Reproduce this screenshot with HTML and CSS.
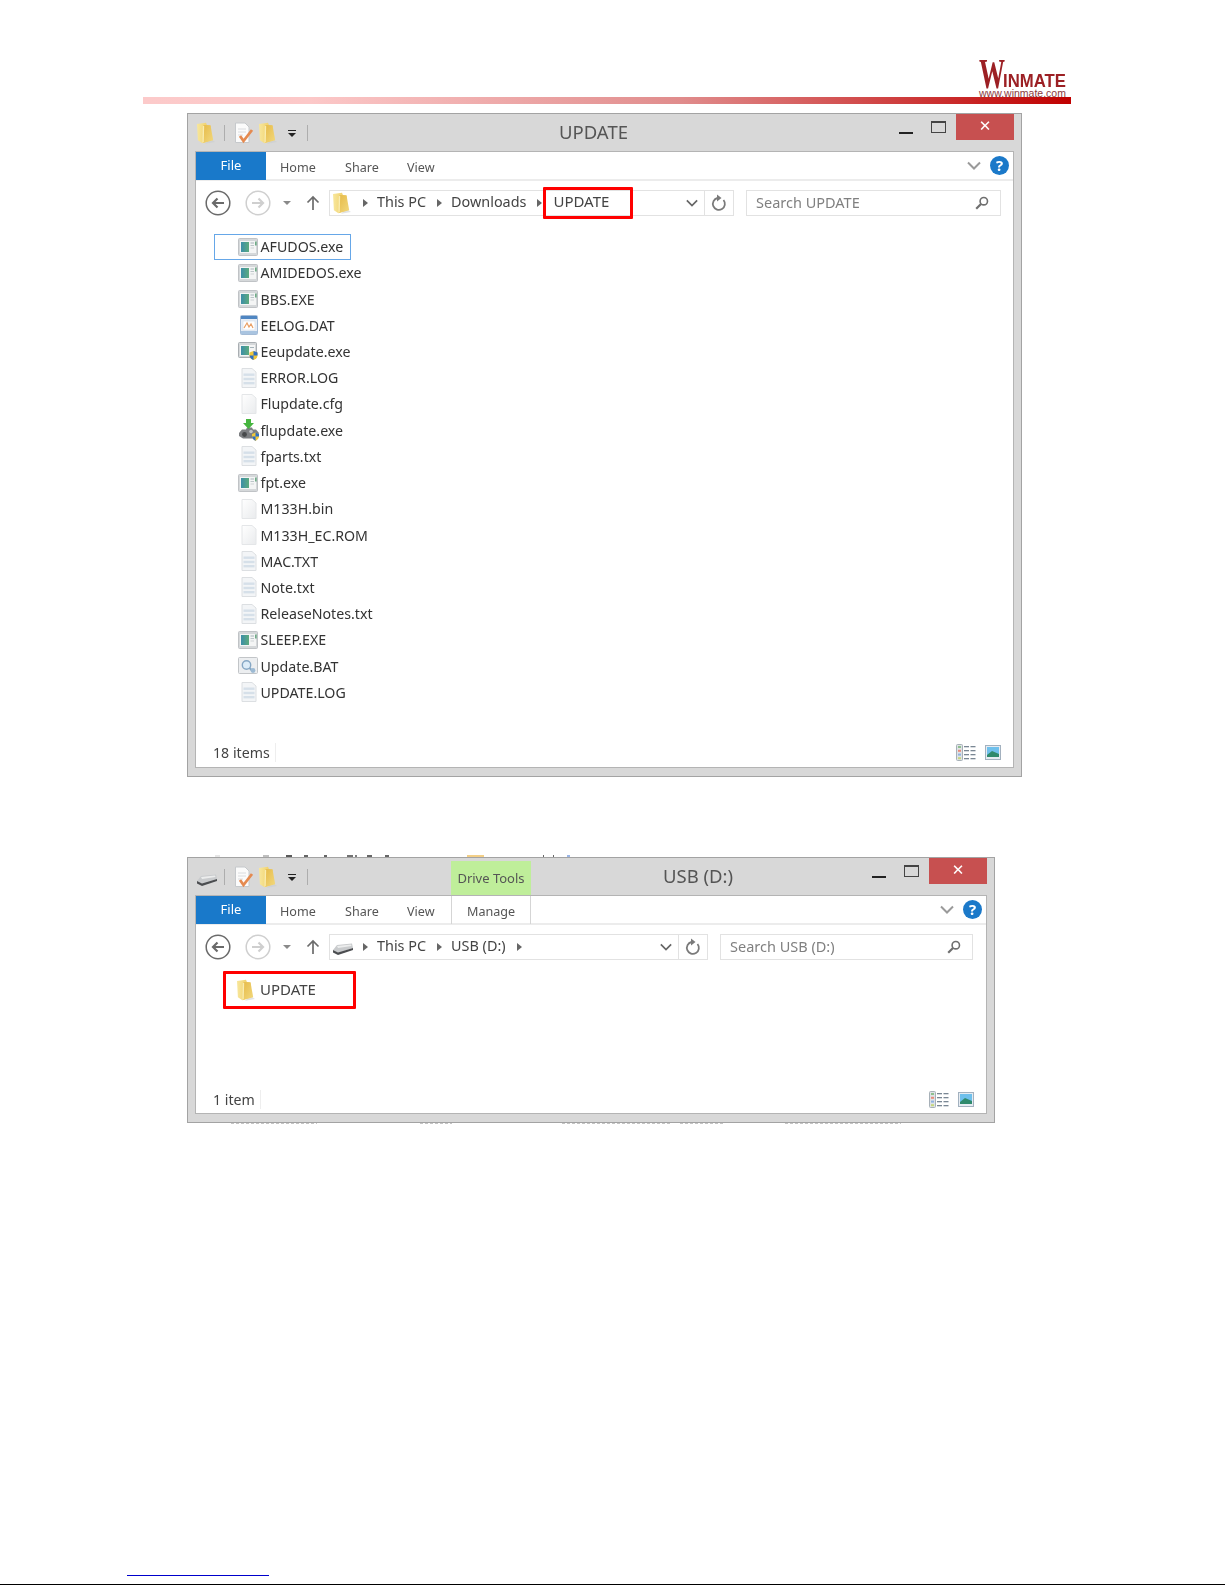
FILE: index.html
```html
<!DOCTYPE html>
<html lang="en">
<head>
<meta charset="utf-8">
<title>UPDATE</title>
<link rel="stylesheet" href="styles.css">
</head>
<body>
<svg class="defs" width="0" height="0" aria-hidden="true">
  <defs>
    <linearGradient id="fold" x1="0" y1="0" x2="1" y2="0"><stop offset="0" stop-color="#f8e79c"/><stop offset="1" stop-color="#edc95c"/></linearGradient>
    <linearGradient id="fold2" x1="0" y1="0" x2="1" y2="1"><stop offset="0" stop-color="#e6ba48"/><stop offset="1" stop-color="#f2d97e"/></linearGradient>
    <linearGradient id="doc" x1="0" y1="0" x2="1" y2="1"><stop offset="0" stop-color="#fff"/><stop offset="1" stop-color="#e9ebed"/></linearGradient>
    <linearGradient id="scr" x1="0" y1="0" x2="1" y2="0"><stop offset="0" stop-color="#3c8ea8"/><stop offset="1" stop-color="#5cab7e"/></linearGradient>
    <symbol id="i-folder" viewBox="0 0 20 24">
      <path d="M14 18 L20 22 L9 24Z" fill="#c9ccd0" opacity=".55"/>
      <path d="M0 2 L10 0.5 L11 3 L15 4 L15.5 20 L6 23.5 L1 20Z" fill="url(#fold)"/>
      <path d="M7 3 L15 3.5 L18 20 L6.5 23Z" fill="url(#fold2)"/>
      <path d="M6.5 4 L8 4 L7.5 22 L6 23Z" fill="#f9ecb0"/>
    </symbol>
    <symbol id="i-exe" viewBox="0 0 20 18">
      <rect x=".5" y=".5" width="19" height="17" rx="1" fill="#d5d8da" stroke="#c0c3c6"/>
      <rect x="2" y="3" width="16" height="12" fill="#f4f5f5"/>
      <rect x="3" y="4" width="8" height="10" fill="url(#scr)"/>
      <rect x="12.5" y="4.5" width="3.5" height="1" fill="#a5b3ba"/>
      <rect x="12.5" y="7" width="3.5" height="1" fill="#bcc5c9"/>
      <rect x="12.5" y="9.5" width="3.5" height="1" fill="#cdd3d6"/>
      <rect x="17.2" y="3.5" width="1.3" height="4" fill="#4f9a6c"/>
    </symbol>
    <symbol id="i-exe-shield" viewBox="0 0 20 18">
      <rect x=".5" y=".5" width="18" height="15" rx="1" fill="#d5d8da" stroke="#a9aeb2"/>
      <rect x="2" y="3" width="15" height="11" fill="#f4f5f5"/>
      <rect x="3" y="4" width="8" height="9" fill="url(#scr)"/>
      <rect x="12" y="5" width="4" height="1" fill="#a5b3ba"/>
      <path d="M11.5 10.5 L15.5 9 L19.5 10.5 L19.5 14 Q19 16.8 15.5 18 Q12 16.8 11.5 14Z" fill="#f0c83a"/>
      <path d="M15.5 9 L19.5 10.5 L19.5 13.5 L15.5 13.5Z M15.5 13.5 L11.5 13.5 Q12 16.8 15.5 18Z" fill="#2f6fc1"/>
    </symbol>
    <symbol id="i-text" viewBox="0 0 16 20">
      <path d="M1 .5 H11 L15 4 V19.5 H1Z" fill="#f3f5f7" stroke="#dcdfe2"/>
      <g fill="#d6e0e9"><rect x="2.5" y="5.5" width="11" height="2.4"/><rect x="2.5" y="9.8" width="11" height="2.4"/><rect x="2.5" y="14" width="11" height="2.4"/></g>
    </symbol>
    <symbol id="i-blank" viewBox="0 0 16 20">
      <path d="M1 .5 H11 L15 4 V19.5 H1Z" fill="url(#doc)" stroke="#e4e6e8"/>
    </symbol>
    <symbol id="i-dat" viewBox="0 0 18 20">
      <rect x=".5" y=".5" width="17" height="19" rx="1" fill="#e8eef6" stroke="#a4bbd6"/>
      <rect x="1" y="1" width="16" height="3" fill="#4f86c2"/>
      <rect x="3" y="6" width="12" height="9" fill="#fff" stroke="#d2dde9" stroke-width=".6"/>
      <path d="M4 13 L7 8 L9 12 L11 9 L13 13" fill="none" stroke="#e9a066" stroke-width="1.2"/>
      <rect x="1" y="16" width="16" height="3" fill="#a9c4e0"/>
    </symbol>
    <symbol id="i-flup" viewBox="0 0 22 22">
      <path d="M1 14 L4 10.5 L8 10.5 L9 8.5 L14 8.5 L15 10.5 L18 10.5 L21 14 L20 17 L16 19.5 L5 19.5 L1 17Z" fill="#7d7f82"/>
      <circle cx="6.5" cy="15.5" r="2.4" fill="#47494b"/>
      <circle cx="13" cy="12.5" r="1.8" fill="#c3c5c7"/>
      <path d="M8 0 H13 V4 H16 L10.5 10 L5 4 H8Z" fill="#46b53f"/>
      <path d="M14 15 L17.5 13.5 L21 15 L21 18 Q20.5 20.5 17.5 22 Q14.5 20.5 14 18Z" fill="#f0c83a"/>
      <path d="M17.5 13.5 L21 15 L21 17.5 L17.5 17.5Z M17.5 17.5 L14 17.5 Q14.5 20.5 17.5 22Z" fill="#2f6fc1"/>
    </symbol>
    <symbol id="i-bat" viewBox="0 0 20 18">
      <rect x=".5" y=".5" width="19" height="16" rx="1" fill="#eceef0" stroke="#c2c5c8"/>
      <circle cx="8.5" cy="8" r="4.2" fill="#dcecf8" stroke="#86a7c4" stroke-width="1.4"/>
      <path d="M11.5 11 L15 14.5" stroke="#86a7c4" stroke-width="2"/>
      <circle cx="15" cy="13.5" r="2.4" fill="#9dbad3"/>
    </symbol>
    <symbol id="i-drive" viewBox="0 0 22 14">
      <path d="M1 8 L5 3 L20 1.5 L21 6 L6 11Z" fill="#c9cbcd"/>
      <path d="M1 8 L1 10.5 L6 13 L21 8 L21 6 L6 10.5Z" fill="#4b4d50"/>
      <path d="M5 4 L19 2.5 L19.5 4 L6 6Z" fill="#eceded"/>
    </symbol>
    <symbol id="i-props" viewBox="0 0 20 22">
      <path d="M1.5 1 H11 L15 5 V20.5 H1.5Z" fill="#fbfbfb" stroke="#c6c9cc"/>
      <g stroke="#dadcdf"><path d="M4 7H12M4 10H12M4 13H9"/></g>
      <path d="M6 14 L9.5 19 L18 8" fill="none" stroke="#e58a50" stroke-width="2.8"/>
    </symbol>
    <symbol id="i-back" viewBox="0 0 26 26">
      <circle cx="13" cy="13" r="11.8" fill="#fff" stroke="currentColor" stroke-width="1.5"/>
      <path d="M19 13 H8 M12.5 8.5 L8 13 L12.5 17.5" fill="none" stroke="currentColor" stroke-width="2.2"/>
    </symbol>
    <symbol id="i-fwd" viewBox="0 0 26 26">
      <circle cx="13" cy="13" r="11.8" fill="#fff" stroke="currentColor" stroke-width="1.5"/>
      <path d="M7 13 H18 M13.5 8.5 L18 13 L13.5 17.5" fill="none" stroke="currentColor" stroke-width="2.2"/>
    </symbol>
    <symbol id="i-up" viewBox="0 0 14 16"><path d="M7 15 V2 M1.5 7.5 L7 2 L12.5 7.5" fill="none" stroke="#6c6c6c" stroke-width="1.7"/></symbol>
    <symbol id="i-chev" viewBox="0 0 14 9"><path d="M1 1.5 L7 7.5 L13 1.5" fill="none" stroke="currentColor" stroke-width="2"/></symbol>
    <symbol id="i-refresh" viewBox="0 0 16 18">
      <path d="M12.5 6 A6 6 0 1 1 6.5 4" fill="none" stroke="#7a7a7a" stroke-width="1.8"/>
      <path d="M6 0.5 V7.5 L10.5 4Z" fill="#7a7a7a"/>
    </symbol>
    <symbol id="i-search" viewBox="0 0 14 14">
      <circle cx="8.8" cy="5.2" r="3.7" fill="none" stroke="#6f6f6f" stroke-width="1.6"/>
      <path d="M6 8 L1.2 12.8" stroke="#6f6f6f" stroke-width="2.2"/>
    </symbol>
    <symbol id="i-details" viewBox="0 0 20 17">
      <rect x=".5" y=".5" width="6" height="16" rx="1" fill="#dfe3e6" stroke="#a7b0b8"/>
      <rect x="2" y="2" width="3" height="2" fill="#8fc08f"/><rect x="2" y="5.8" width="3" height="2" fill="#e88a7c"/><rect x="2" y="9.6" width="3" height="2" fill="#8fb2e0"/><rect x="2" y="13.2" width="3" height="2" fill="#c6d67e"/>
      <g fill="#7a8794"><rect x="8" y="2" width="5" height="1.3"/><rect x="14.5" y="2" width="5" height="1.3"/><rect x="8" y="6" width="5" height="1.3"/><rect x="14.5" y="6" width="5" height="1.3"/><rect x="8" y="10" width="5" height="1.3"/><rect x="14.5" y="10" width="5" height="1.3"/><rect x="8" y="14" width="5" height="1.3"/><rect x="14.5" y="14" width="5" height="1.3"/></g>
    </symbol>
    <symbol id="i-large" viewBox="0 0 16 15">
      <rect x=".5" y=".5" width="15" height="14" fill="#e6ecf2" stroke="#a3b1bf"/>
      <rect x="2" y="2" width="12" height="10" fill="#6fc0ec"/>
      <path d="M2 10 L7 6 L14 9 V12 H2Z" fill="#2f8a6c"/>
    </symbol>
  </defs>
</svg>

<div class="page">
  <header class="doc-head">
    <div class="logo">
      <div class="logo-name"><span class="logo-w">W</span><span class="logo-rest">INMATE</span></div>
      <div class="logo-url">www.winmate.com</div>
    </div>
    <div class="doc-bar"></div>
  </header>

  <section class="win win-a">
    <div class="titlebar">
      <svg class="qat-first"><use href="#i-folder"/></svg>
      <span class="qat-sep"></span>
      <svg class="qat-icon"><use href="#i-props"/></svg>
      <svg class="qat-folder"><use href="#i-folder"/></svg>
      <span class="qat-drop"></span>
      <span class="qat-sep qat-sep-end"></span>
      <span class="win-title">UPDATE</span>
      <div class="controls">
        <span class="ctl-min"></span>
        <span class="ctl-max"></span>
        <span class="ctl-close">✕</span>
      </div>
    </div>
    <div class="frame">
      <div class="ribbon">
        <span class="tab-file">File</span>
        <span class="tab">Home</span>
        <span class="tab">Share</span>
        <span class="tab">View</span>
        <span class="ribbon-end">
          <svg class="rib-chev"><use href="#i-chev"/></svg>
          <span class="help">?</span>
        </span>
      </div>
      <div class="nav">
        <svg class="nav-back"><use href="#i-back"/></svg>
        <svg class="nav-fwd"><use href="#i-fwd"/></svg>
        <span class="nav-drop"></span>
        <svg class="nav-up"><use href="#i-up"/></svg>
        <div class="address">
          <svg class="addr-folder"><use href="#i-folder"/></svg>
          <span class="crumb-arrow"></span>
          <span class="crumb">This PC</span>
          <span class="crumb-arrow"></span>
          <span class="crumb">Downloads</span>
          <span class="crumb-arrow"></span>
          <span class="crumb-box">UPDATE</span>
          <span class="addr-end">
            <svg class="addr-chev"><use href="#i-chev"/></svg>
            <span class="addr-refresh"><svg class="refresh"><use href="#i-refresh"/></svg></span>
          </span>
        </div>
        <div class="search">
          <span class="search-text">Search UPDATE</span>
          <svg class="search-icon"><use href="#i-search"/></svg>
        </div>
      </div>
      <ul class="files">
        <li class="file selected"><span class="file-ico"><svg class="ico-wide"><use href="#i-exe"/></svg></span>AFUDOS.exe</li>
        <li class="file"><span class="file-ico"><svg class="ico-wide"><use href="#i-exe"/></svg></span>AMIDEDOS.exe</li>
        <li class="file"><span class="file-ico"><svg class="ico-wide"><use href="#i-exe"/></svg></span>BBS.EXE</li>
        <li class="file"><span class="file-ico"><svg class="ico-dat"><use href="#i-dat"/></svg></span>EELOG.DAT</li>
        <li class="file"><span class="file-ico"><svg class="ico-wide"><use href="#i-exe-shield"/></svg></span>Eeupdate.exe</li>
        <li class="file"><span class="file-ico"><svg class="ico-doc"><use href="#i-text"/></svg></span>ERROR.LOG</li>
        <li class="file"><span class="file-ico"><svg class="ico-doc"><use href="#i-blank"/></svg></span>Flupdate.cfg</li>
        <li class="file"><span class="file-ico"><svg class="ico-flup"><use href="#i-flup"/></svg></span>flupdate.exe</li>
        <li class="file"><span class="file-ico"><svg class="ico-doc"><use href="#i-text"/></svg></span>fparts.txt</li>
        <li class="file"><span class="file-ico"><svg class="ico-wide"><use href="#i-exe"/></svg></span>fpt.exe</li>
        <li class="file"><span class="file-ico"><svg class="ico-doc"><use href="#i-blank"/></svg></span>M133H.bin</li>
        <li class="file"><span class="file-ico"><svg class="ico-doc"><use href="#i-blank"/></svg></span>M133H_EC.ROM</li>
        <li class="file"><span class="file-ico"><svg class="ico-doc"><use href="#i-text"/></svg></span>MAC.TXT</li>
        <li class="file"><span class="file-ico"><svg class="ico-doc"><use href="#i-text"/></svg></span>Note.txt</li>
        <li class="file"><span class="file-ico"><svg class="ico-doc"><use href="#i-text"/></svg></span>ReleaseNotes.txt</li>
        <li class="file"><span class="file-ico"><svg class="ico-wide"><use href="#i-exe"/></svg></span>SLEEP.EXE</li>
        <li class="file"><span class="file-ico"><svg class="ico-wide"><use href="#i-bat"/></svg></span>Update.BAT</li>
        <li class="file"><span class="file-ico"><svg class="ico-doc"><use href="#i-text"/></svg></span>UPDATE.LOG</li>
      </ul>
      <div class="status">
        <span class="status-text">18 items</span>
        <svg class="view-details"><use href="#i-details"/></svg>
        <svg class="view-large"><use href="#i-large"/></svg>
      </div>
    </div>
  </section>

  <svg class="scrap scrap-top" viewBox="0 0 800 2" aria-hidden="true">
    <g opacity=".75">
      <rect x="25" width="5" height="2" fill="#ddd"/>
      <rect x="73" width="6" height="2" fill="#aaa"/>
      <rect x="96" width="6" height="2" fill="#222"/>
      <rect x="114" width="4" height="2" fill="#333"/>
      <rect x="134" width="3" height="2" fill="#333"/>
      <rect x="157" width="6" height="2" fill="#444"/>
      <rect x="165" width="2" height="2" fill="#555"/>
      <rect x="177" width="5" height="2" fill="#333"/>
      <rect x="195" width="4" height="2" fill="#333"/>
      <rect x="277" width="17" height="2" fill="#f0c060"/>
      <rect x="353" width="1" height="2" fill="#333"/>
      <rect x="363" width="1" height="2" fill="#333"/>
      <rect x="377" width="3" height="2" fill="#7a9ee0"/>
    </g>
  </svg>

  <section class="win win-b">
    <div class="titlebar">
      <svg class="qat-drive"><use href="#i-drive"/></svg>
      <span class="qat-sep"></span>
      <svg class="qat-icon"><use href="#i-props"/></svg>
      <svg class="qat-folder"><use href="#i-folder"/></svg>
      <span class="qat-drop"></span>
      <span class="qat-sep qat-sep-end"></span>
      <span class="tool-tab">Drive Tools</span>
      <span class="win-title">USB (D:)</span>
      <div class="controls">
        <span class="ctl-min"></span>
        <span class="ctl-max"></span>
        <span class="ctl-close">✕</span>
      </div>
    </div>
    <div class="frame">
      <div class="ribbon">
        <span class="tab-file">File</span>
        <span class="tab">Home</span>
        <span class="tab">Share</span>
        <span class="tab">View</span>
        <span class="tab tab-manage">Manage</span>
        <span class="ribbon-end">
          <svg class="rib-chev"><use href="#i-chev"/></svg>
          <span class="help">?</span>
        </span>
      </div>
      <div class="nav">
        <svg class="nav-back"><use href="#i-back"/></svg>
        <svg class="nav-fwd"><use href="#i-fwd"/></svg>
        <span class="nav-drop"></span>
        <svg class="nav-up"><use href="#i-up"/></svg>
        <div class="address">
          <svg class="addr-drive"><use href="#i-drive"/></svg>
          <span class="crumb-arrow"></span>
          <span class="crumb">This PC</span>
          <span class="crumb-arrow"></span>
          <span class="crumb">USB (D:)</span>
          <span class="crumb-arrow"></span>
          <span class="addr-end">
            <svg class="addr-chev"><use href="#i-chev"/></svg>
            <span class="addr-refresh"><svg class="refresh"><use href="#i-refresh"/></svg></span>
          </span>
        </div>
        <div class="search">
          <span class="search-text">Search USB (D:)</span>
          <svg class="search-icon"><use href="#i-search"/></svg>
        </div>
      </div>
      <div class="folder-area">
        <div class="folder-box">
          <svg class="folder-ico"><use href="#i-folder"/></svg>
          <span class="folder-name">UPDATE</span>
        </div>
      </div>
      <div class="status">
        <span class="status-text">1 item</span>
        <svg class="view-details"><use href="#i-details"/></svg>
        <svg class="view-large"><use href="#i-large"/></svg>
      </div>
    </div>
  </section>

  <svg class="scrap scrap-bottom" viewBox="0 0 800 1" aria-hidden="true">
    <g class="scrap-dash">
      <path d="M41 .5H127"/>
      <path d="M230 .5H262"/>
      <path d="M372 .5H480"/>
      <path d="M490 .5H533"/>
      <path d="M595 .5H711"/>
    </g>
  </svg>

  <footer class="doc-foot">
    <div class="foot-link"></div>
    <div class="foot-rule"></div>
  </footer>
</div>
</body>
</html>
```
FILE: styles.css
```css
* { box-sizing: border-box; }
html, body { margin: 0; padding: 0; background: #fff; }
body { width: 1225px; height: 1585px; overflow: hidden; font-family: "Noto Sans", "Open Sans", sans-serif; }
.defs { display: block; height: 0; width: 0; }
.page { height: 1585px; display: flex; flex-direction: column; }

/* document header */
.doc-head { height: 104px; padding: 59px 154px 0 143px; display: flex; flex-direction: column; }
.logo { height: 38px; align-self: flex-end; width: 88px; margin-right: 4px; color: #9c2024; }
.logo-name { height: 29px; white-space: nowrap; display: flex; align-items: flex-end; }
.logo-w { font: bold 42px/28px "Liberation Serif", serif; transform: scaleX(.62); transform-origin: left bottom; width: 24px; height: 28px; display: block; }
.logo-rest { font: bold 19px/14px "Liberation Sans", sans-serif; transform: scaleX(.88); transform-origin: left bottom; display: block; height: 14px; width: 64px; }
.logo-url { font: 10.5px/9px "Liberation Sans", sans-serif; color: #8b3a3d; white-space: nowrap; margin-top: 1px; }
.doc-bar { height: 7px; background: linear-gradient(90deg, #fccaca 0%, #fcc8c8 18%, #e08c8c 58%, #c00000 100%); }

/* windows */
.win { margin-left: 187px; background: #d8d8d8; border: 1px solid #a3a3a3; padding: 0 7px 8px; display: flex; flex-direction: column; color: #444; filter: blur(.3px); }
.win-a { width: 835px; height: 664px; margin-top: 9px; }
.win-b { width: 808px; height: 266px; }
.titlebar { height: 37px; flex: none; display: flex; align-items: center; }
.frame { flex: 1; min-height: 0; background: #fff; border: 1px solid #b4b4b4; display: flex; flex-direction: column; }

.qat-first { width: 18px; height: 22px; margin-left: 2px; }
.qat-drive { width: 22px; height: 14px; margin-top: 6px; margin-left: 1px; }
.qat-sep { width: 1px; height: 16px; background: #adadad; margin-left: 9px; }
.win-b .qat-sep { margin-left: 6px; }
.qat-icon { width: 20px; height: 22px; margin-left: 9px; }
.qat-folder { width: 18px; height: 22px; margin-left: 5px; }
.qat-drop { width: 8px; height: 6px; margin-left: 11px; border-top: 1px solid #222; position: relative; }
.qat-drop::after { content: ""; position: absolute; left: 0; top: 2px; border: 4px solid transparent; border-top: 4px solid #222; border-bottom: 0; }
.qat-sep.qat-sep-end { margin-left: 11px; }
.win-title { font-size: 18.5px; color: #555; white-space: nowrap; margin-bottom: 2px; }
.win-a .win-title { margin-left: 251px; }
.win-b .win-title { margin-left: 133px; }
.tool-tab { width: 80px; height: 34px; margin: 3px -1px 0 143px; background: #bfee9a; color: #555; font-size: 13px; line-height: 34px; text-align: center; align-self: flex-start; white-space: nowrap; }
.controls { margin-left: auto; display: flex; align-self: flex-start; align-items: flex-start; }
.ctl-min { width: 14px; height: 2px; background: #222; margin: 18px 0 0; }
.ctl-max { width: 15px; height: 12px; border: 1px solid #444; border-top-width: 2px; margin: 7px 10px 0 18px; }
.ctl-close { width: 58px; height: 26px; background: #c75050; color: #fff; font: bold 15px/25px "DejaVu Sans", sans-serif; text-align: center; }

/* ribbon */
.ribbon { height: 29px; flex: none; border-bottom: 2px solid #ececec; display: flex; align-items: stretch; }
.tab-file { width: 70px; height: 28px; background: #1979ca; color: #fff; font-size: 13px; line-height: 27px; text-align: center; }
.tab { font-size: 12.6px; color: #555; line-height: 32px; margin-left: 14px; width: 34px; white-space: nowrap; }
.tab + .tab { margin-left: 31px; }
.tab:nth-of-type(3) { width: 33px; }
.tab:nth-of-type(4) { margin-left: 29px; }
.tab.tab-manage { margin-left: 10px; padding: 0 15px; width: 80px; border-left: 1px solid #d5d5d5; border-right: 1px solid #d5d5d5; height: 28px; }
.ribbon-end { margin-left: auto; display: flex; align-items: center; padding-right: 4px; }
.rib-chev { width: 14px; height: 9px; color: #9a9a9a; margin-right: 9px; }
.help { width: 19px; height: 19px; border-radius: 50%; background: #1b79c9; color: #fff; font: bold 15px/19px "Noto Sans", sans-serif; text-align: center; }

/* nav */
.nav { height: 41px; flex: none; display: flex; align-items: center; padding: 2px 0 0 9px; }
.nav-back { width: 26px; height: 26px; color: #6a6a6a; }
.nav-fwd { width: 26px; height: 26px; color: #cfcfcf; margin-left: 14px; }
.nav-drop { width: 0; height: 0; border: 4px solid transparent; border-top: 4px solid #8a8a8a; border-bottom: 0; margin-left: 12px; }
.nav-up { width: 14px; height: 16px; margin-left: 15px; }
.address { width: 405px; height: 26px; margin-left: 9px; border: 1px solid #e2e2e2; display: flex; align-items: center; font-size: 14.4px; color: #444; }
.win-b .address { width: 379px; }
.addr-folder { width: 18px; height: 22px; margin-left: 3px; }
.addr-drive { width: 22px; height: 14px; margin-left: 2px; margin-top: 4px; }
.crumb-arrow { width: 0; height: 0; border: 4.5px solid transparent; border-left: 5px solid #666; border-right: 0; margin-left: 11px; }
.addr-folder + .crumb-arrow, .addr-drive + .crumb-arrow { margin-left: 12px; }
.addr-drive + .crumb-arrow { margin-left: 9px; }
.crumb { margin-left: 9px; white-space: nowrap; padding-bottom: 2px; }
.crumb-box { height: 32px; width: 90px; margin-left: 1px; border: 3px solid #f00; border-radius: 1px; line-height: 23px; padding-left: 7px; white-space: nowrap; font-size: 15px; }
.addr-end { margin-left: auto; display: flex; align-items: center; height: 100%; }
.addr-chev { width: 12px; height: 8px; color: #666; margin-right: 6px; }
.addr-refresh { width: 29px; height: 100%; border-left: 1px solid #e2e2e2; display: flex; align-items: center; justify-content: center; }
.refresh { width: 16px; height: 18px; }
.search { width: 255px; height: 26px; margin-left: 12px; border: 1px solid #e2e2e2; display: flex; align-items: center; justify-content: space-between; padding: 0 11px 0 9px; }
.win-b .search { width: 253px; }
.search-text { font-size: 14.5px; color: #808080; white-space: nowrap; padding-bottom: 2px; }
.search-icon { width: 14px; height: 14px; }

/* file list */
.files { flex: 1; margin: 0; padding: 11.5px 0 0 18px; list-style: none; min-height: 0; }
.file { height: 26.22px; width: 137px; display: flex; align-items: center; font-size: 14.2px; color: #333; white-space: nowrap; }
.file.selected { height: 26px; margin-bottom: .22px; border: 1px solid #66a7e8; }
.file-ico { width: 46.5px; padding-left: 24px; display: flex; align-items: center; flex: none; }
.file.selected .file-ico { width: 45.5px; padding-left: 23px; }
.ico-wide { width: 20px; height: 18px; }
.ico-doc { width: 16px; height: 20px; margin-left: 3px; }
.ico-dat { width: 18px; height: 20px; margin-left: 2px; }
.ico-flup { width: 22px; height: 22px; }

/* second window content */
.folder-area { flex: 1; min-height: 0; padding: 5px 0 0 27px; }
.folder-box { width: 133px; height: 38px; border: 3px solid #f00; border-radius: 1px; display: flex; align-items: center; padding-left: 11px; }
.folder-ico { width: 18px; height: 22px; }
.folder-name { margin-left: 5px; font-size: 15px; color: #444; padding-bottom: 2px; }

/* status bar */
.status { height: 30px; flex: none; display: flex; align-items: center; padding: 0 12px 0 17px; }
.win-b .status { height: 28px; }
.status-text { font-size: 14.2px; color: #444; padding-right: 5px; border-right: 1px solid #eee; }
.view-details { width: 20px; height: 17px; margin-left: auto; }
.view-large { width: 16px; height: 15px; margin-left: 9px; }

/* scan remnants around window 2 */
.scrap { display: block; margin-left: 190px; width: 800px; flex: none; }
.scrap-top { height: 2px; margin-top: 78px; }
.scrap-bottom { height: 1px; }
.scrap-dash path { stroke: #c4c4c4; stroke-width: 1; stroke-dasharray: 3 2; fill: none; }

/* footer */
.doc-foot { margin-top: auto; }
.foot-link { margin-left: 127px; width: 142px; height: 1.5px; background: #0000cc; margin-bottom: 8px; }
.foot-rule { height: 1px; background: #000; }
```
